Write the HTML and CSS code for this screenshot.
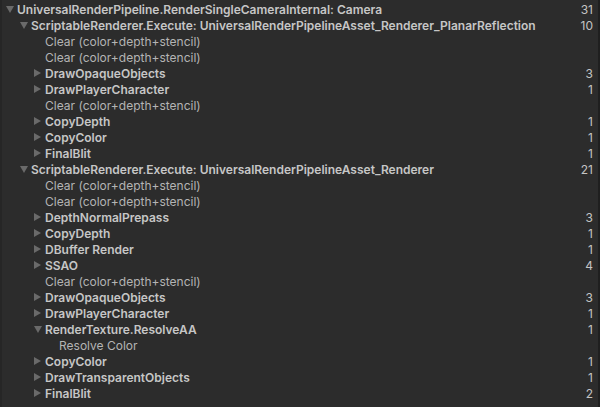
FILE: index.html
```html
<!DOCTYPE html>
<html>
<head>
<meta charset="utf-8">
<link rel="stylesheet" href="styles.css">
</head>
<body>
<div class="panel">
  <div class="edge"></div>
  <div class="tree">
    <div class="row l0 b"><span class="arr open"></span><span class="name">UniversalRenderPipeline.RenderSingleCameraInternal: Camera</span><span class="cnt">31</span></div>
    <div class="row l1 b"><span class="arr open"></span><span class="name">ScriptableRenderer.Execute: UniversalRenderPipelineAsset_Renderer_PlanarReflection</span><span class="cnt">10</span></div>
    <div class="row l2"><span class="arr none"></span><span class="name">Clear (color+depth+stencil)</span><span class="cnt"></span></div>
    <div class="row l2"><span class="arr none"></span><span class="name">Clear (color+depth+stencil)</span><span class="cnt"></span></div>
    <div class="row l2 b"><span class="arr"></span><span class="name">DrawOpaqueObjects</span><span class="cnt">3</span></div>
    <div class="row l2 b"><span class="arr"></span><span class="name">DrawPlayerCharacter</span><span class="cnt">1</span></div>
    <div class="row l2"><span class="arr none"></span><span class="name">Clear (color+depth+stencil)</span><span class="cnt"></span></div>
    <div class="row l2 b"><span class="arr"></span><span class="name">CopyDepth</span><span class="cnt">1</span></div>
    <div class="row l2 b"><span class="arr"></span><span class="name">CopyColor</span><span class="cnt">1</span></div>
    <div class="row l2 b"><span class="arr"></span><span class="name">FinalBlit</span><span class="cnt">1</span></div>
    <div class="row l1 b"><span class="arr open"></span><span class="name">ScriptableRenderer.Execute: UniversalRenderPipelineAsset_Renderer</span><span class="cnt">21</span></div>
    <div class="row l2"><span class="arr none"></span><span class="name">Clear (color+depth+stencil)</span><span class="cnt"></span></div>
    <div class="row l2"><span class="arr none"></span><span class="name">Clear (color+depth+stencil)</span><span class="cnt"></span></div>
    <div class="row l2 b"><span class="arr"></span><span class="name">DepthNormalPrepass</span><span class="cnt">3</span></div>
    <div class="row l2 b"><span class="arr"></span><span class="name">CopyDepth</span><span class="cnt">1</span></div>
    <div class="row l2 b"><span class="arr"></span><span class="name">DBuffer Render</span><span class="cnt">1</span></div>
    <div class="row l2 b"><span class="arr"></span><span class="name">SSAO</span><span class="cnt">4</span></div>
    <div class="row l2"><span class="arr none"></span><span class="name">Clear (color+depth+stencil)</span><span class="cnt"></span></div>
    <div class="row l2 b"><span class="arr"></span><span class="name">DrawOpaqueObjects</span><span class="cnt">3</span></div>
    <div class="row l2 b"><span class="arr"></span><span class="name">DrawPlayerCharacter</span><span class="cnt">1</span></div>
    <div class="row l2 b"><span class="arr open"></span><span class="name">RenderTexture.ResolveAA</span><span class="cnt">1</span></div>
    <div class="row l3"><span class="arr none"></span><span class="name">Resolve Color</span><span class="cnt"></span></div>
    <div class="row l2 b"><span class="arr"></span><span class="name">CopyColor</span><span class="cnt">1</span></div>
    <div class="row l2 b"><span class="arr"></span><span class="name">DrawTransparentObjects</span><span class="cnt">1</span></div>
    <div class="row l2 b"><span class="arr"></span><span class="name">FinalBlit</span><span class="cnt">2</span></div>
  </div>
</div>
</body>
</html>
```
FILE: styles.css
```css
html, body {
  margin: 0;
  padding: 0;
  background: #2c2c2c;
}
.panel {
  width: 600px;
  height: 407px;
  display: flex;
  background: #2c2c2c;
  overflow: hidden;
  font-family: Inter, "Noto Sans", sans-serif;
  font-size: 12px;
}
.edge {
  width: 2px;
  flex: none;
  background: #262626;
}
.tree {
  flex: 1;
  padding-top: 1px;
  padding-right: 5px;
  border-right: 2px solid #1f1f1f;
}
.row {
  height: 16px;
  display: flex;
  align-items: center;
  color: #b4b4b4;
  white-space: nowrap;
}
.row.b { color: #c6c6c6; font-weight: 600; }
.l0 { padding-left: 2px; }
.l1 { padding-left: 16px; }
.l2 { padding-left: 30px; }
.l3 { padding-left: 44px; }
.arr {
  width: 13px;
  height: 16px;
  flex: none;
  position: relative;
}
.arr::before {
  content: "";
  position: absolute;
  left: 2px;
  top: 4px;
  border-left: 7px solid #6a6a6a;
  border-top: 4px solid transparent;
  border-bottom: 4px solid transparent;
}
.arr.open::before {
  left: 2px;
  top: 5px;
  border-top: 7px solid #6a6a6a;
  border-left: 4px solid transparent;
  border-right: 4px solid transparent;
  border-bottom: none;
}
.arr.none::before { display: none; }
.name { flex: 1; overflow: hidden; }
.cnt { text-align: right; font-weight: 400; color: #c4c4c4; }
```
